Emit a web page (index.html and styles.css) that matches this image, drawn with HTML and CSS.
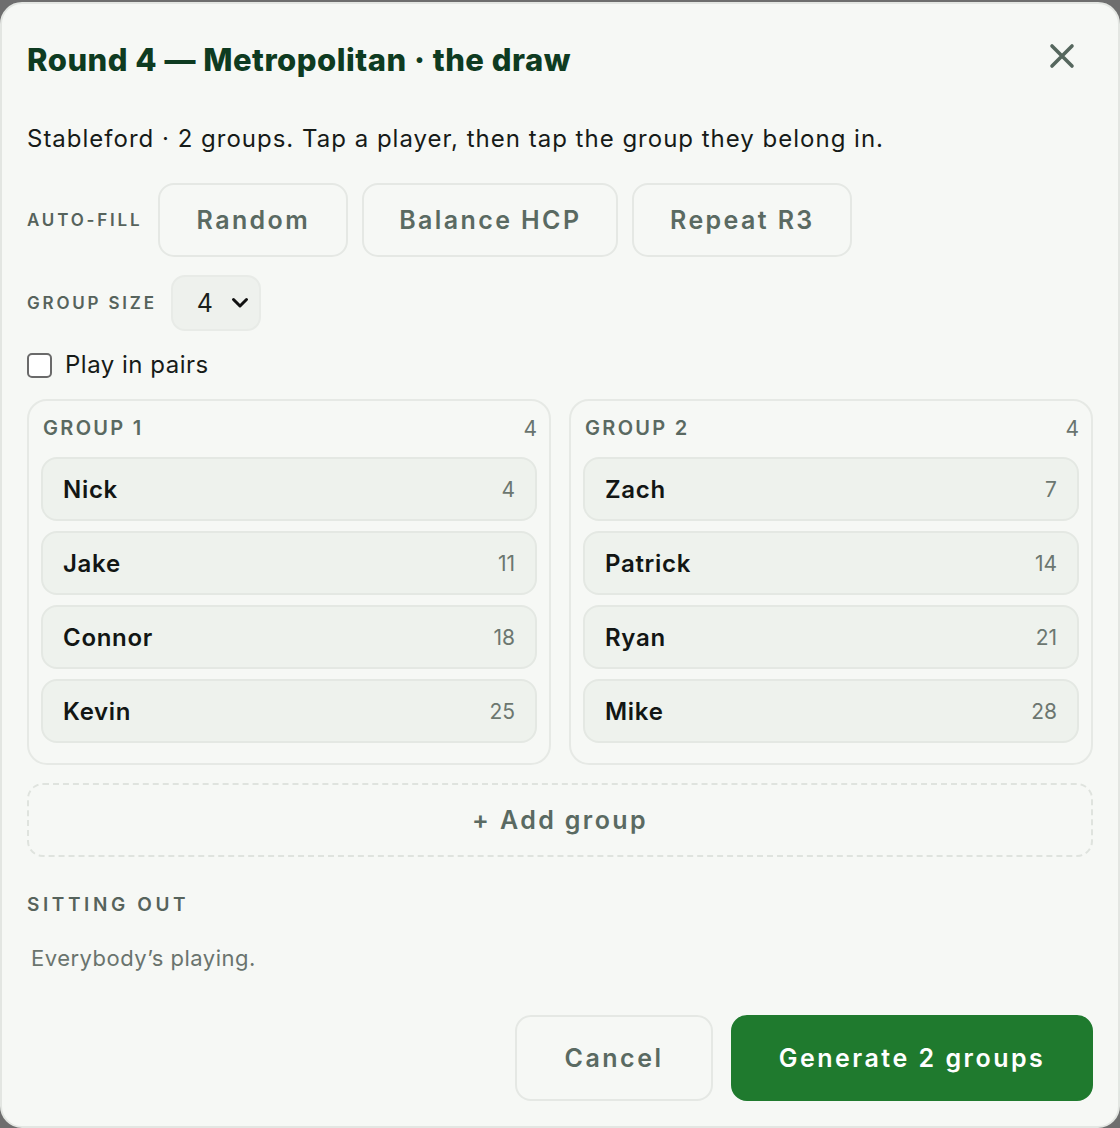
FILE: index.html
```html
<!DOCTYPE html>
<html lang="en">
<head>
<meta charset="utf-8">
<title>Round 4 — the draw</title>
<link rel="stylesheet" href="styles.css">
</head>
<body>
<div class="dialog">
  <header class="head">
    <h1 class="title">Round 4 — Metropolitan · the draw</h1>
    <button class="close" aria-label="Close">
      <svg width="28" height="28" viewBox="0 0 28 28"><path d="M4 4 L24 24 M24 4 L4 24" stroke="#56675e" stroke-width="3.6" stroke-linecap="round" fill="none"/></svg>
    </button>
  </header>
  <p class="sub">Stableford · 2 groups. Tap a player, then tap the group they belong in.</p>

  <div class="autofill">
    <span class="label">AUTO-FILL</span>
    <button class="btn b-random">Random</button>
    <button class="btn b-balance">Balance HCP</button>
    <button class="btn b-repeat">Repeat R3</button>
  </div>

  <div class="sizerow">
    <span class="label">GROUP SIZE</span>
    <div class="select"><span>4</span>
      <svg width="18" height="12" viewBox="0 0 18 12"><path d="M2.5 2.5 L9 9 L15.5 2.5" stroke="#111" stroke-width="3" fill="none" stroke-linecap="round" stroke-linejoin="round"/></svg>
    </div>
  </div>

  <label class="check"><span class="box"></span>Play in pairs</label>

  <div class="groups">
    <section class="group">
      <div class="ghead"><span>GROUP 1</span><span class="gcount">4</span></div>
      <div class="player"><span class="name">Nick</span><span class="hcp">4</span></div>
      <div class="player"><span class="name">Jake</span><span class="hcp">11</span></div>
      <div class="player"><span class="name">Connor</span><span class="hcp">18</span></div>
      <div class="player"><span class="name">Kevin</span><span class="hcp">25</span></div>
    </section>
    <section class="group">
      <div class="ghead"><span>GROUP 2</span><span class="gcount">4</span></div>
      <div class="player"><span class="name">Zach</span><span class="hcp">7</span></div>
      <div class="player"><span class="name">Patrick</span><span class="hcp">14</span></div>
      <div class="player"><span class="name">Ryan</span><span class="hcp">21</span></div>
      <div class="player"><span class="name">Mike</span><span class="hcp">28</span></div>
    </section>
  </div>

  <button class="addgroup">+ Add group</button>

  <div class="sitting">SITTING OUT</div>
  <p class="empty">Everybody’s playing.</p>

  <footer class="foot">
    <button class="btn cancel">Cancel</button>
    <button class="btn primary">Generate 2 groups</button>
  </footer>
</div>
</body>
</html>
```

FILE: styles.css
```css
* { box-sizing: border-box; }
html, body { margin: 0; padding: 0; }
body {
  background: #6e6e6e;
  font-family: Inter, "Noto Sans", sans-serif;
  color: #1a1f1c;
  height: 1128px;
  overflow: hidden;
}
.dialog {
  margin-top: 2px;
  height: 1126px;
  background: #f6f8f5;
  border: 2px solid #e3e6e2;
  border-radius: 22px;
  padding: 36px 25px 0 25px;
  display: flex;
  flex-direction: column;
}
.head {
  display: flex;
  align-items: center;
  justify-content: space-between;
  height: 40px;
}
.title {
  margin: 0;
  font-size: 31px;
  line-height: 40px;
  font-weight: 800;
  color: #0e3b21;
  letter-spacing: 0.5px;
}
.close {
  background: none;
  border: none;
  padding: 0;
  margin: -8px 17px 0 0;
  width: 28px;
  height: 28px;
  display: flex;
}
.sub {
  margin: 43px 0 0;
  font-size: 24px;
  line-height: 32px;
  letter-spacing: 1px;
  color: #161b18;
}
.label {
  font-size: 17px;
  font-weight: 600;
  letter-spacing: 2.8px;
  color: #56635c;
}
.autofill {
  margin-top: 28px;
  display: flex;
  align-items: center;
  gap: 14px;
}
.autofill .label { margin-right: 2px; }
.btn {
  font-family: Inter, "Noto Sans", sans-serif;
  height: 74px;
  padding: 0;
  border: 2px solid #e5e8e4;
  background: #f6f8f5;
  border-radius: 16px;
  font-size: 25px;
  font-weight: 600;
  letter-spacing: 2.4px;
  color: #5a6a62;
}
.b-random { width: 190px; }
.b-balance { width: 256px; }
.b-repeat { width: 220px; }
.sizerow {
  margin-top: 18px;
  display: flex;
  align-items: center;
  gap: 14px;
}
.select {
  width: 90px;
  height: 56px;
  border: 2px solid #e8ebe7;
  background: #eef1ed;
  border-radius: 14px;
  display: flex;
  align-items: center;
  justify-content: space-between;
  padding: 0 10px 0 24px;
  font-size: 25px;
  color: #1a1f1c;
}
.check {
  margin-top: 18px;
  display: flex;
  align-items: center;
  gap: 13px;
  font-size: 24px;
  line-height: 32px;
  letter-spacing: 0.5px;
  color: #161b18;
}
.box {
  width: 25px;
  height: 25px;
  border: 2px solid #6a6a6a;
  border-radius: 5px;
  background: #fff;
}
.groups {
  margin-top: 18px;
  display: grid;
  grid-template-columns: 1fr 1fr;
  gap: 18px;
}
.group {
  border: 2px solid #e6e9e5;
  border-radius: 20px;
  padding: 13px 12px 20px;
  display: flex;
  flex-direction: column;
  gap: 10px;
}
.ghead {
  display: flex;
  justify-content: space-between;
  align-items: center;
  height: 28px;
  padding-left: 2px;
  margin-bottom: 5px;
  font-size: 20px;
  font-weight: 600;
  letter-spacing: 2.3px;
  color: #5a6961;
}
.gcount {
  font-weight: 400;
  letter-spacing: 0;
  font-size: 21px;
  color: #69746e;
}
.player {
  height: 64px;
  border: 2px solid #e4e8e3;
  background: #eef2ed;
  border-radius: 16px;
  padding: 0 20px;
  display: flex;
  justify-content: space-between;
  align-items: center;
}
.name {
  font-size: 24px;
  font-weight: 600;
  letter-spacing: 0.7px;
  color: #121614;
}
.hcp {
  font-size: 21px;
  color: #6c7770;
}
.addgroup {
  margin-top: 18px;
  height: 74px;
  width: 100%;
  border: 2px dashed #dfe3de;
  background: transparent;
  border-radius: 16px;
  font-family: Inter, "Noto Sans", sans-serif;
  font-size: 25px;
  font-weight: 600;
  letter-spacing: 2.4px;
  color: #5a6a62;
}
.sitting {
  margin-top: 36px;
  font-size: 19px;
  line-height: 24px;
  font-weight: 600;
  letter-spacing: 3.6px;
  color: #56635c;
}
.empty {
  margin: 26px 0 0 4px;
  font-size: 22px;
  line-height: 30px;
  letter-spacing: 0.5px;
  color: #6a746e;
}
.foot {
  margin-top: 42px;
  display: flex;
  justify-content: flex-end;
  gap: 18px;
}
.foot .btn { height: 86px; letter-spacing: 2.5px; }
.cancel { width: 198px; }
.primary {
  width: 362px;
  background: #1f7a2e;
  border-color: #1f7a2e;
  color: #fff;
}
```
